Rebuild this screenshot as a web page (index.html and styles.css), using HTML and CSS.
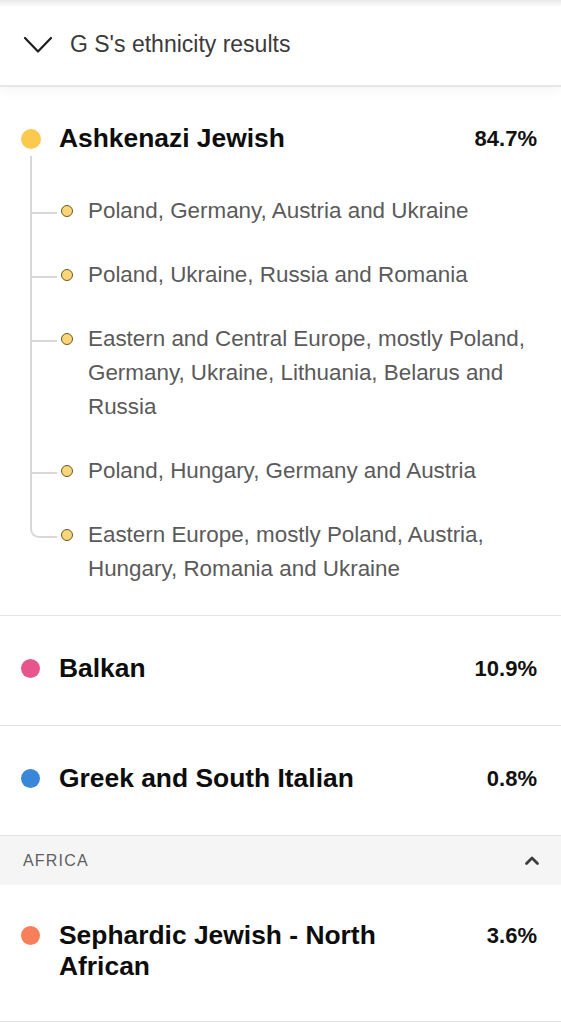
FILE: index.html
```html
<!DOCTYPE html>
<html lang="en">
<head>
<meta charset="utf-8">
<title>G S's ethnicity results</title>
<link rel="stylesheet" href="styles.css">
</head>
<body>
<div class="topbar"></div>
<header class="results-header">
  <svg class="chevron-down" width="30" height="18" viewBox="0 0 30 18" aria-hidden="true">
    <polyline points="2,2 15,15.5 28,2" fill="none" stroke="#1e1e1e" stroke-width="2.2" stroke-linecap="round" stroke-linejoin="round"/>
  </svg>
  <h1 class="results-title">G S's ethnicity results</h1>
</header>

<section class="region region-expanded">
  <div class="region-row">
    <span class="dot dot-large dot-yellow"></span>
    <span class="region-name">Ashkenazi Jewish</span>
    <span class="region-pct">84.7%</span>
  </div>
  <ul class="sublist">
    <li class="subitem"><span class="subdot"></span><span class="subtext">Poland, Germany, Austria and Ukraine</span></li>
    <li class="subitem"><span class="subdot"></span><span class="subtext">Poland, Ukraine, Russia and Romania</span></li>
    <li class="subitem"><span class="subdot"></span><span class="subtext">Eastern and Central Europe, mostly Poland, Germany, Ukraine, Lithuania, Belarus and Russia</span></li>
    <li class="subitem"><span class="subdot"></span><span class="subtext">Poland, Hungary, Germany and Austria</span></li>
    <li class="subitem"><span class="subdot"></span><span class="subtext">Eastern Europe, mostly Poland, Austria, Hungary, Romania and Ukraine</span></li>
  </ul>
</section>

<section class="region">
  <div class="region-row">
    <span class="dot dot-pink"></span>
    <span class="region-name">Balkan</span>
    <span class="region-pct">10.9%</span>
  </div>
</section>

<section class="region">
  <div class="region-row">
    <span class="dot dot-blue"></span>
    <span class="region-name">Greek and South Italian</span>
    <span class="region-pct">0.8%</span>
  </div>
</section>

<div class="group-header">
  <span class="group-label">AFRICA</span>
  <svg class="caret-up" width="16" height="11" viewBox="0 0 16 11" aria-hidden="true">
    <polyline points="2.5,8.5 8,3 13.5,8.5" fill="none" stroke="#3c3c3c" stroke-width="2.8" stroke-linecap="round" stroke-linejoin="round"/>
  </svg>
</div>

<section class="region region-last">
  <div class="region-row">
    <span class="dot dot-orange"></span>
    <span class="region-name">Sephardic Jewish - North African</span>
    <span class="region-pct">3.6%</span>
  </div>
</section>
</body>
</html>
```

FILE: styles.css
```css
* { box-sizing: border-box; }

html, body {
  margin: 0;
  padding: 0;
  background: #ffffff;
}

body {
  font-family: "Liberation Sans", Arial, Helvetica, sans-serif;
  color: #111111;
}

.topbar {
  height: 6px;
  background: linear-gradient(#e9e9e9, #fbfbfb);
}

.results-header {
  height: 81px;
  display: flex;
  align-items: center;
  gap: 17px;
  padding: 0 0 3px 23px;
  background: #ffffff;
  border-bottom: 2px solid #e6e6e6;
  box-shadow: 0 5px 9px rgba(0, 0, 0, 0.035);
  position: relative;
}

.chevron-down { flex: none; margin-top: 1px; }

.results-title {
  margin: 0;
  font-size: 23px;
  font-weight: normal;
  color: #3a3a3a;
}

.region {
  padding: 37px 24px 41px 21px;
  border-bottom: 1px solid #e2e2e2;
}

.region-expanded {
  padding-top: 36px;
  padding-bottom: 29px;
}

.region-last {
  padding-top: 35px;
  padding-bottom: 39px;
}

.region-row {
  display: flex;
  align-items: flex-start;
}

.dot {
  flex: none;
  width: 19px;
  height: 19px;
  border-radius: 50%;
  margin-top: 6px;
  margin-right: 19px;
}

.dot-large {
  width: 20px;
  height: 20px;
  margin-top: 6px;
  margin-right: 18px;
}

.dot-yellow { background: #fcc94f; }
.dot-pink { background: #e8558d; }
.dot-blue { background: #3a86d9; }
.dot-orange { background: #f77f5a; }

.region-name {
  flex: 1;
  font-size: 26.4px;
  font-weight: bold;
  line-height: 31px;
  color: #0d0d0d;
}

.region-pct {
  flex: none;
  width: 80px;
  margin-left: 24px;
  text-align: right;
  font-size: 22px;
  font-weight: bold;
  line-height: 31px;
  color: #111111;
}

.sublist {
  list-style: none;
  margin: 40px 0 0 35px;
  padding: 0;
}

.subitem {
  position: relative;
  display: flex;
  align-items: flex-start;
  margin-top: 30px;
}

.subitem:first-child { margin-top: 0; }

.subitem::before {
  content: "";
  position: absolute;
  left: -26px;
  top: -30px;
  width: 25px;
  height: 48px;
  border-left: 2px solid #d8d8d8;
  border-bottom: 2px solid #d8d8d8;
}

.subitem:first-child::before {
  top: -38px;
  height: 56px;
}

.subitem:last-child::before {
  border-bottom-left-radius: 9px;
}

.subitem:not(:last-child)::after {
  content: "";
  position: absolute;
  left: -26px;
  top: 17px;
  bottom: 0;
  border-left: 2px solid #d8d8d8;
}

.subdot {
  flex: none;
  width: 12px;
  height: 12px;
  margin: 11px 15px 0 5px;
  border-radius: 50%;
  background: #f8d679;
  border: 1.5px solid #6a5726;
}

.subtext {
  font-size: 22.4px;
  line-height: 34px;
  color: #5a5a5a;
}

.group-header {
  height: 49px;
  display: flex;
  align-items: center;
  justify-content: space-between;
  padding: 0 21px 0 23px;
  background: #f5f5f5;
}

.group-label {
  font-size: 16px;
  letter-spacing: 1.2px;
  color: #606060;
}

.caret-up { flex: none; margin-top: 0; }
```
